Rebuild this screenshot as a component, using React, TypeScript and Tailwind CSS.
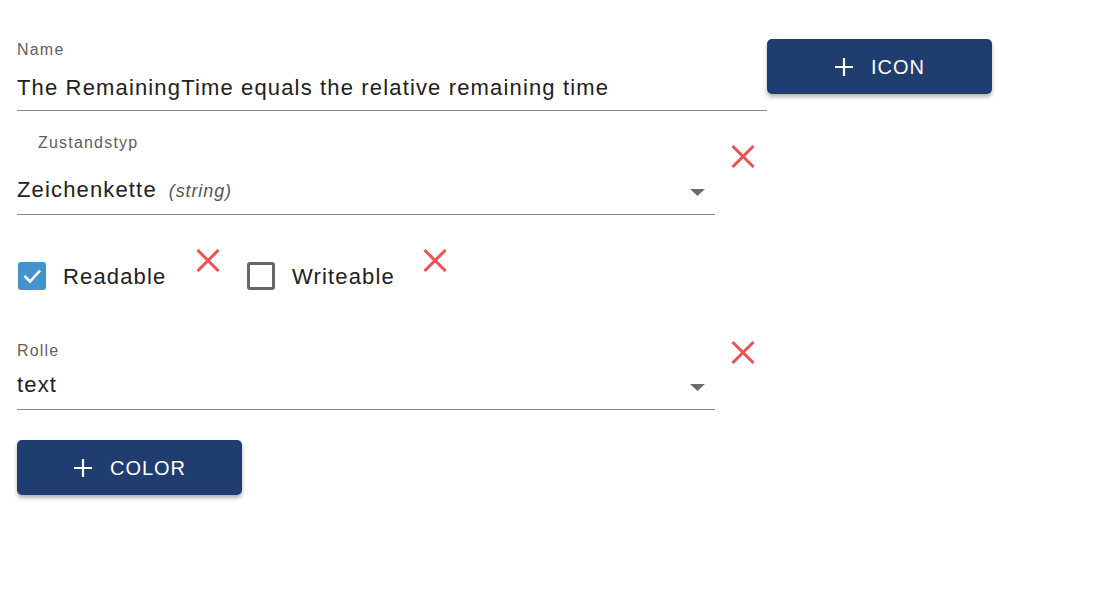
import React from "react";

const XIcon = ({ className = "" }: { className?: string }) => (
  <svg width="24" height="23" viewBox="0 0 24 23" className={className}>
    <path d="M1.5 1 L22.5 22 M22.5 1 L1.5 22" stroke="#f05252" strokeWidth="3" strokeLinecap="butt" />
  </svg>
);

const Plus = () => (
  <svg width="20" height="20" viewBox="0 0 20 20">
    <path d="M10 1 V19 M1 10 H19" stroke="white" strokeWidth="2.2" />
  </svg>
);

const Arrow = () => (
  <svg width="15" height="7" viewBox="0 0 15 7" className="mt-[12px]">
    <path d="M0 0 L15 0 L7.5 7 Z" fill="#6b6b6b" />
  </svg>
);

const Btn = ({ label }: { label: string }) => (
  <button className="w-[225px] h-[55px] rounded-[5px] bg-[#1f3d6e] text-white flex items-center justify-center gap-[17px] text-[20px] leading-[20px] tracking-[1px] shadow-[0_3px_4px_rgba(0,0,0,0.3)]">
    <Plus />
    <span>{label}</span>
  </button>
);

export default function App() {
  return (
    <div className="w-[1107px] h-[595px] bg-white font-[family-name:Liberation_Sans,Arial,sans-serif] text-[#212121]">
      <div className="pl-[17px] pt-[39px] flex flex-col">
        {/* Name row */}
        <div className="flex items-start">
          <div className="w-[750px] mt-[3px] border-b border-[#8a8a8a]">
            <div className="text-[16px] leading-[16px] tracking-[1.2px] text-[#5f5f5f]">Name</div>
            <div className="text-[22px] leading-[26px] tracking-[1.15px] mt-[17px] pb-[9px]">
              The RemainingTime equals the relative remaining time
            </div>
          </div>
          <Btn label="ICON" />
        </div>

        {/* Zustandstyp row */}
        <div className="flex items-start mt-[24px]">
          <div className="w-[698px] border-b border-[#8a8a8a]">
            <div className="pl-[21px] text-[16px] leading-[16px] tracking-[1.2px] text-[#5f5f5f]">Zustandstyp</div>
            <div className="flex items-start justify-between mt-[26px] pb-[9px] pr-[10px]">
              <div className="flex items-baseline">
                <span className="text-[22px] leading-[26px] tracking-[1.15px]">Zeichenkette</span>
                <span className="text-[18px] italic tracking-[0.9px] text-[#555] ml-[12px]">(string)</span>
              </div>
              <Arrow />
            </div>
          </div>
          <XIcon className="ml-[16px] mt-[10px]" />
        </div>

        {/* Checkbox row */}
        <div className="flex items-start mt-[34px] h-[41px]">
          <div className="flex items-start mt-[13px] ml-[1px]">
            <div className="w-[28px] h-[28px] rounded-[3px] bg-[#4593cd] flex items-center justify-center">
              <svg width="22" height="22" viewBox="0 0 22 22">
                <path d="M3.5 11 L9 16.5 L19 5.5" stroke="white" strokeWidth="2.6" fill="none" />
              </svg>
            </div>
            <span className="text-[22px] leading-[26px] tracking-[1.15px] ml-[17px] mt-[2px] w-[133px]">Readable</span>
          </div>
          <XIcon />
          <div className="flex items-start mt-[13px] ml-[27px]">
            <div className="w-[28px] h-[28px] rounded-[3px] border-[3px] border-[#666]" />
            <span className="text-[22px] leading-[26px] tracking-[1.15px] ml-[17px] mt-[2px] w-[131px]">Writeable</span>
          </div>
          <XIcon />
        </div>

        {/* Rolle row */}
        <div className="flex items-start mt-[51px]">
          <div className="w-[698px] mt-[2px] border-b border-[#8a8a8a]">
            <div className="text-[16px] leading-[16px] tracking-[1.2px] text-[#5f5f5f]">Rolle</div>
            <div className="flex items-start justify-between mt-[13px] pb-[11px] pr-[10px]">
              <span className="text-[22px] leading-[26px] tracking-[1.15px]">text</span>
              <Arrow />
            </div>
          </div>
          <XIcon className="ml-[16px]" />
        </div>

        <div className="mt-[30px]">
          <Btn label="COLOR" />
        </div>
      </div>
    </div>
  );
}
